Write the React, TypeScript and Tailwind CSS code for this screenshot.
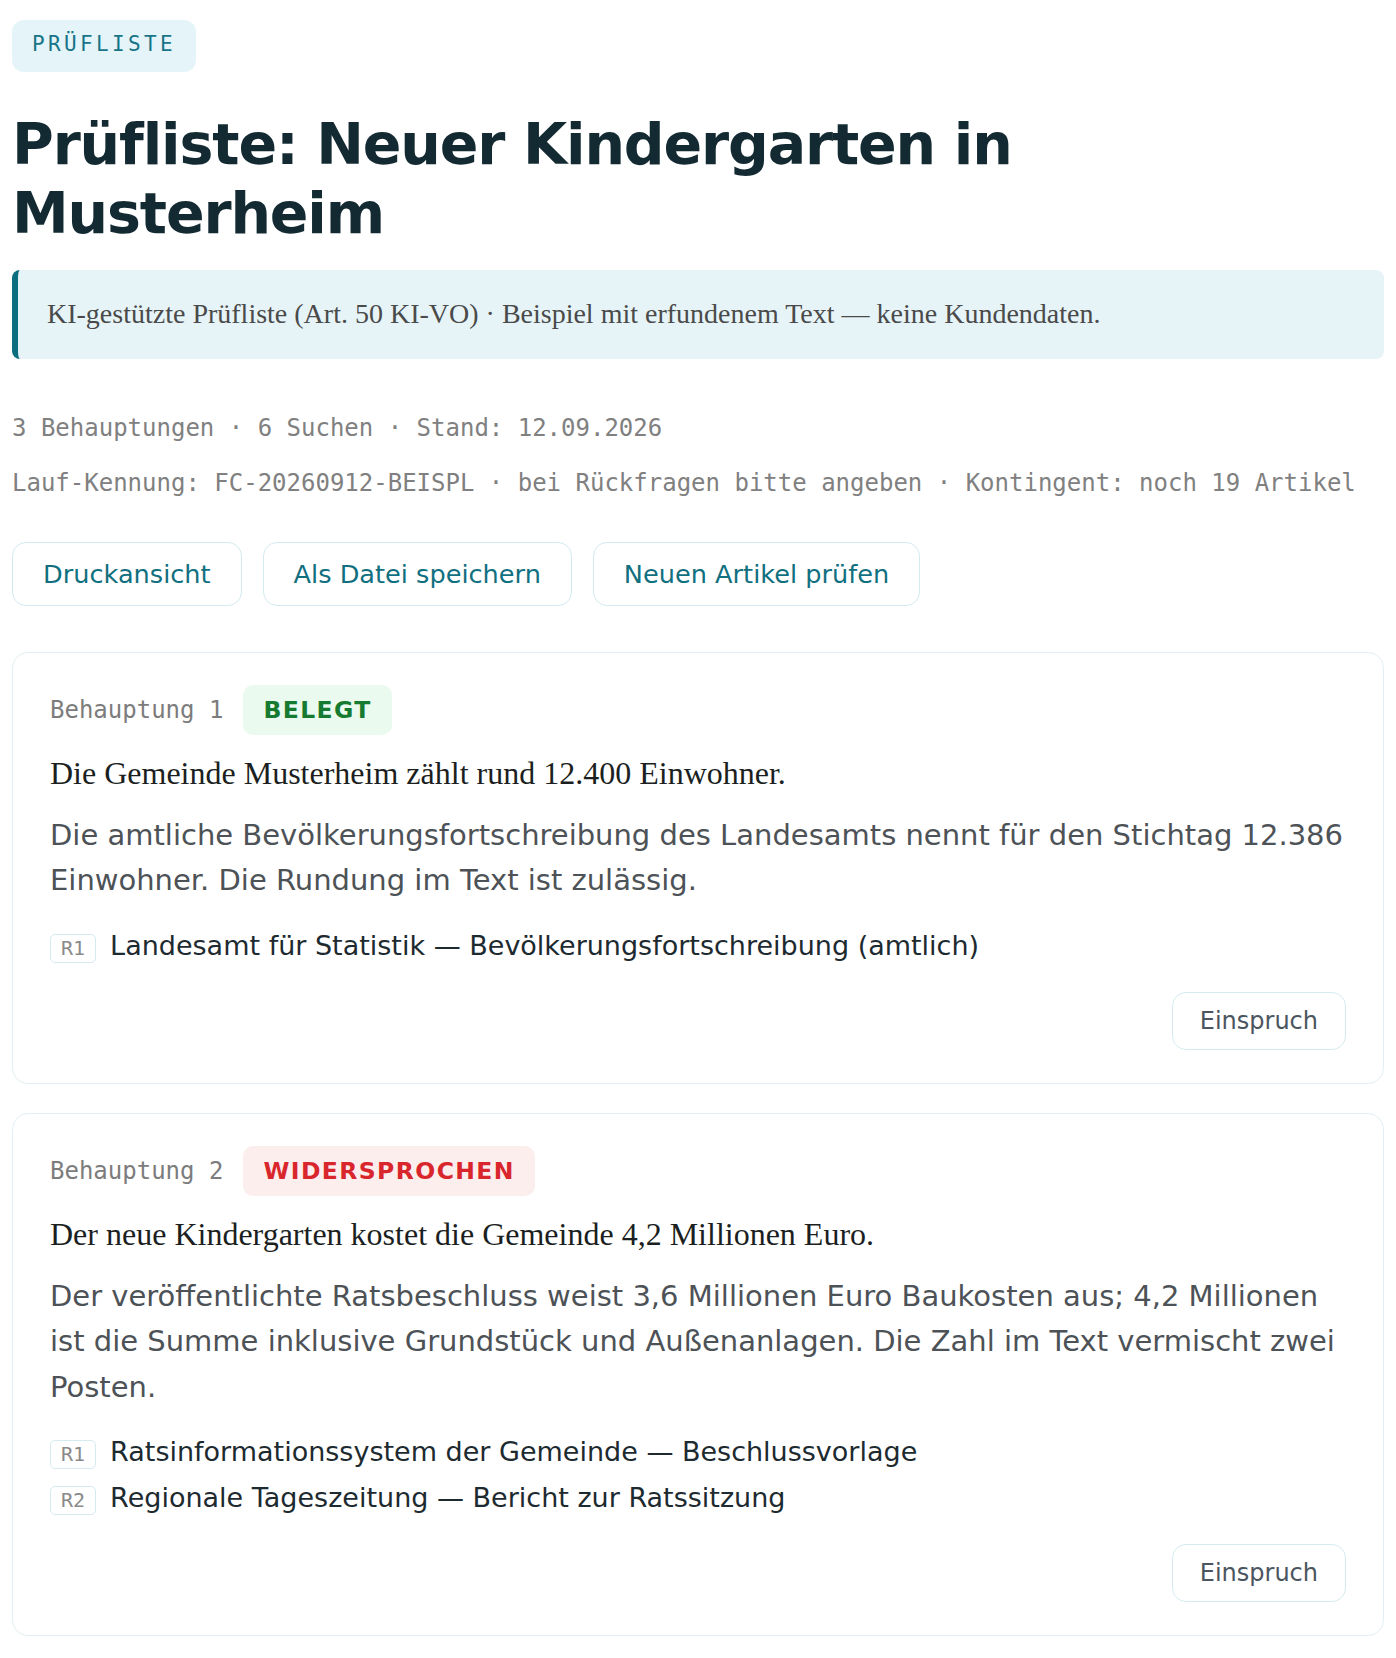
import React from "react";

type Tone = "ok" | "bad";

interface Claim {
  n: number;
  verdict: string;
  tone: Tone;
  claim: string;
  note: string;
  sources: string[];
}

const claims: Claim[] = [
  {
    n: 1,
    verdict: "BELEGT",
    tone: "ok",
    claim: "Die Gemeinde Musterheim zählt rund 12.400 Einwohner.",
    note: "Die amtliche Bevölkerungsfortschreibung des Landesamts nennt für den Stichtag 12.386 Einwohner. Die Rundung im Text ist zulässig.",
    sources: ["Landesamt für Statistik — Bevölkerungsfortschreibung (amtlich)"],
  },
  {
    n: 2,
    verdict: "WIDERSPROCHEN",
    tone: "bad",
    claim: "Der neue Kindergarten kostet die Gemeinde 4,2 Millionen Euro.",
    note: "Der veröffentlichte Ratsbeschluss weist 3,6 Millionen Euro Baukosten aus; 4,2 Millionen ist die Summe inklusive Grundstück und Außenanlagen. Die Zahl im Text vermischt zwei Posten.",
    sources: [
      "Ratsinformationssystem der Gemeinde — Beschlussvorlage",
      "Regionale Tageszeitung — Bericht zur Ratssitzung",
    ],
  },
];

const Verdict: React.FC<{ tone: Tone; label: string }> = ({ tone, label }) => (
  <span
    className={
      tone === "ok"
        ? "rounded-[10px] bg-[#ebfaee] px-5 py-2 text-[23.5px] font-bold leading-[34px] tracking-[0.06em] text-[#167a30]"
        : "rounded-[10px] bg-[#fdeeee] px-5 py-2 text-[23.5px] font-bold leading-[34px] tracking-[0.06em] text-[#d8262c]"
    }
  >
    {label}
  </span>
);

const ClaimCard: React.FC<{ item: Claim }> = ({ item }) => (
  <article className="rounded-2xl border border-[#e2f0f4] bg-white px-[37px] pt-8 pb-[33px]">
    {/* Header */}
    <div className="flex items-center gap-5">
      <span className="font-['DejaVu_Sans_Mono',monospace] text-[24px] leading-9 text-[#7c7c7c]">
        Behauptung {item.n}
      </span>
      <Verdict tone={item.tone} label={item.verdict} />
    </div>

    <p className="mt-[16px] font-['Liberation_Serif',serif] text-[32px] leading-[1.4] text-[#1c1f22]">
      {item.claim}
    </p>

    <p className="mt-[17px] text-[29px] leading-[45.5px] text-[#4d5257]">
      {item.note}
    </p>

    {/* Sources */}
    <ul className="mt-6 flex flex-col gap-[10px]">
      {item.sources.map((s, i) => (
        <li key={s} className="flex items-baseline gap-[14px]">
          <span className="rounded-[5px] border border-[#d6ebf0] px-[10px] py-px font-['DejaVu_Sans_Mono',monospace] text-[20px] leading-[25px] text-[#8a8a8a]">
            R{i + 1}
          </span>
          <span className="text-[27px] leading-9 text-[#1d2a30]">{s}</span>
        </li>
      ))}
    </ul>

    <div className="mt-7 flex justify-end">
      <button className="rounded-[14px] border border-[#d6ebf0] bg-white px-[27px] py-[10px] text-[24px] leading-9 text-[#4b5560]">
        Einspruch
      </button>
    </div>
  </article>
);

export default function App() {
  return (
    <div className="min-h-screen bg-white px-3 pt-5 pb-10 font-['DejaVu_Sans',sans-serif]">
      <span className="inline-block rounded-xl bg-[#e4f4f8] px-5 pt-[8px] pb-[12px] font-['DejaVu_Sans_Mono',monospace] text-[21px] leading-8 tracking-[0.16em] text-[#187488]">
        PRÜFLISTE
      </span>

      <h1 className="mt-[38px] text-[57px] font-bold leading-[69px] tracking-[-0.02em] text-[#142a33]">
        Prüfliste: Neuer Kindergarten in Musterheim
      </h1>

      <div className="mt-[22px] rounded-lg border-l-[6px] border-[#0c6f80] bg-[#e6f4f8] py-[22px] pl-[29px] pr-6 font-['Liberation_Serif',serif] text-[28px] leading-[1.6] text-[#4a4a4a]">
        KI-gestützte Prüfliste (Art. 50 KI-VO) · Beispiel mit erfundenem Text — keine Kundendaten.
      </div>

      {/* Meta */}
      <div className="mt-[51px] flex flex-col gap-[19px] font-['DejaVu_Sans_Mono',monospace] text-[24px] leading-9 text-[#808080]">
        <p>3 Behauptungen · 6 Suchen · Stand: 12.09.2026</p>
        <p>Lauf-Kennung: FC-20260912-BEISPL · bei Rückfragen bitte angeben · Kontingent: noch 19 Artikel</p>
      </div>

      {/* Actions */}
      <div className="mt-[41px] flex gap-[21px]">
        {["Druckansicht", "Als Datei speichern", "Neuen Artikel prüfen"].map((label) => (
          <button
            key={label}
            className="rounded-[14px] border border-[#d3eaf0] bg-white px-[30px] py-3 text-[25.6px] leading-[1.5] text-[#10707f]"
          >
            {label}
          </button>
        ))}
      </div>

      {/* Claims */}
      <div className="mt-[46px] flex flex-col gap-[29px]">
        {claims.map((c) => (
          <ClaimCard key={c.n} item={c} />
        ))}
      </div>
    </div>
  );
}
